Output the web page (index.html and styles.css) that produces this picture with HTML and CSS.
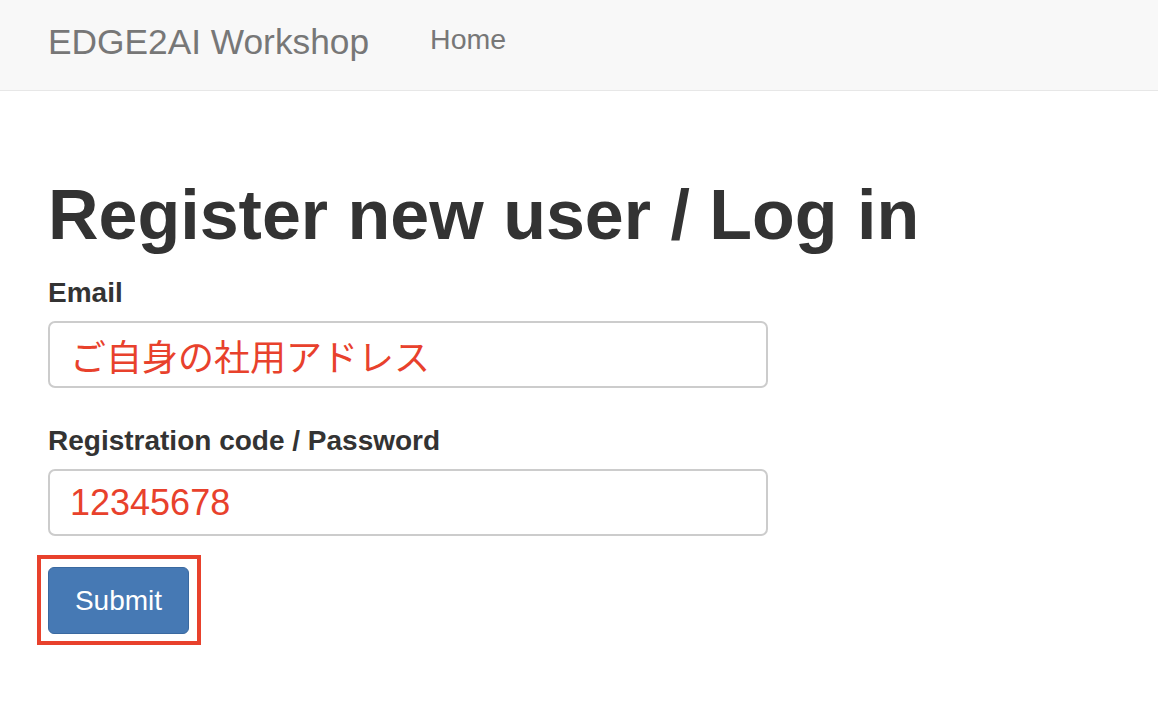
FILE: index.html
```html
<!DOCTYPE html>
<html lang="ja">
<head>
<meta charset="utf-8">
<title>EDGE2AI Workshop</title>
<link rel="stylesheet" href="styles.css">
</head>
<body>
<nav class="navbar">
  <a class="brand" href="#">EDGE2AI Workshop</a>
  <a class="nav-link" href="#">Home</a>
</nav>
<main class="container">
  <h1 class="title">Register new user / Log in</h1>
  <form class="form">
    <div class="group">
      <label class="label" for="email">Email</label>
      <div class="input" id="email">ご自身の社用アドレス</div>
    </div>
    <div class="group">
      <label class="label" for="pw">Registration code / Password</label>
      <div class="input" id="pw">12345678</div>
    </div>
    <div class="highlight">
      <button type="button" class="btn">Submit</button>
    </div>
  </form>
</main>
</body>
</html>
```
FILE: styles.css
```css
* { box-sizing: border-box; }
html, body { margin: 0; padding: 0; background: #fff; }
body {
  font-family: "Liberation Sans", Arial, "Noto Sans CJK JP", sans-serif;
  color: #333;
}
.navbar {
  height: 91px;
  background: #f8f8f8;
  border-bottom: 1px solid #e7e7e7;
  display: flex;
  align-items: flex-start;
  padding-left: 48px;
}
.brand {
  font-size: 35.3px;
  line-height: 40px;
  margin-top: 22px;
  color: #777;
  text-decoration: none;
  margin-right: 61px;
}
.nav-link {
  font-size: 28.5px;
  line-height: 40px;
  margin-top: 19px;
  color: #777;
  text-decoration: none;
}
.container {
  padding: 0 48px;
}
.title {
  font-size: 70px;
  font-weight: 700;
  margin: 85px 0 0;
  line-height: 78px;
}
.form {
  margin-top: 19px;
  width: 720px;
}
.group {
  margin-bottom: 33px;
}
.label {
  display: block;
  font-size: 28px;
  font-weight: 700;
  line-height: 40px;
  margin-bottom: 8px;
}
.input {
  height: 67px;
  border: 2px solid #ccc;
  border-radius: 7px;
  padding: 0 20px;
  display: flex;
  align-items: center;
  font-size: 36px;
  color: #e8412c;
  font-family: "Liberation Sans", Arial, "Noto Sans CJK JP", sans-serif;
}
.highlight {
  display: inline-block;
  margin-left: -11px;
  margin-top: -14px;
  border: 4px solid #e8412c;
  padding: 8px 8px 7px 7px;
}
.btn {
  display: block;
  width: 141px;
  height: 67px;
  background: #4679b4;
  border: 1px solid #3a69a0;
  border-radius: 6px;
  color: #fff;
  font-family: "Liberation Sans", Arial, sans-serif;
  font-size: 28px;
  padding: 0;
}
```
